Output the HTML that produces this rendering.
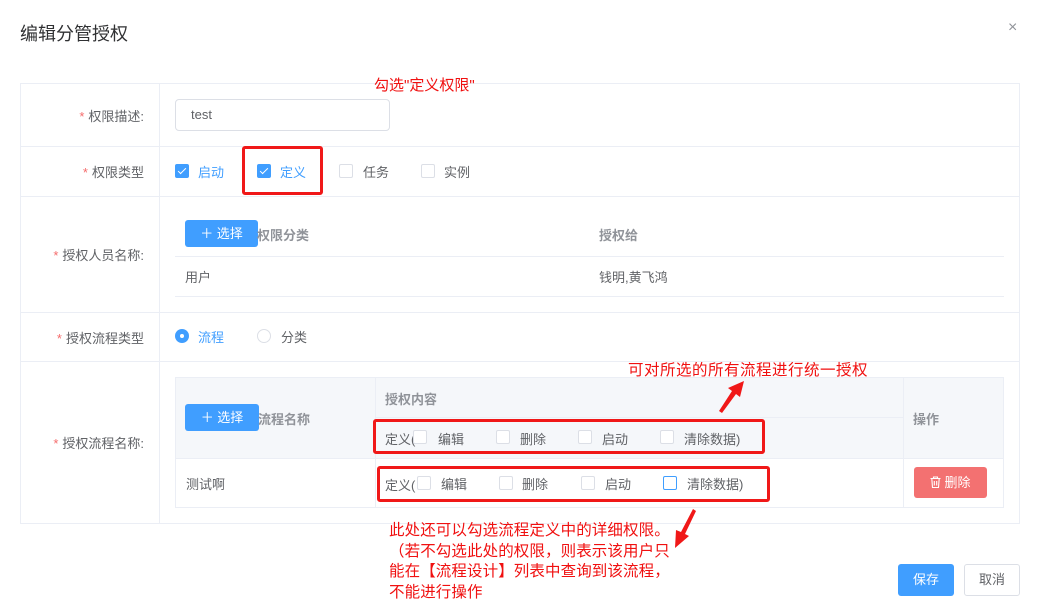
<!DOCTYPE html>
<html><head><meta charset="utf-8"><style>
*{margin:0;padding:0;box-sizing:border-box}
body{width:1040px;height:616px;background:#fff;font-family:"Liberation Sans","Noto Sans CJK SC",sans-serif;font-size:13px;color:#606266;position:relative;overflow:hidden}
.a{position:absolute;white-space:nowrap}
.l{position:absolute;background:#ebeef5}
.cb{position:absolute;width:14px;height:14px;border:1px solid #dcdfe6;border-radius:2px;background:#fff}
.cb.on{background:#409eff;border-color:#409eff}
.cb.on:after{content:"";position:absolute;left:4px;top:1px;width:3px;height:7px;border:solid #fff;border-width:0 1px 1px 0;transform:rotate(45deg)}
.lab{position:absolute;right:896px;white-space:nowrap;color:#606266}
.lab b{color:#f56c6c;font-weight:normal;margin-right:4px}
.red{color:#f01010}
.rb{position:absolute;border:3px solid #f01818;border-radius:3px}
.btn{position:absolute;background:#409eff;color:#fff;border-radius:3px;text-align:center}
</style></head><body>
<div class="a" style="left:20px;top:20px;font-size:18px;color:#303133">编辑分管授权</div>
<div class="a" style="left:1008px;top:19px;font-size:16px;color:#909399">×</div>

<div class="a" style="left:20px;top:83px;width:1000px;height:441px;border:1px solid #ebeef5"></div>
<div class="l" style="left:159px;top:83px;width:1px;height:441px"></div>
<div class="l" style="left:20px;top:146px;width:1000px;height:1px"></div>
<div class="l" style="left:20px;top:196px;width:1000px;height:1px"></div>
<div class="l" style="left:20px;top:312px;width:1000px;height:1px"></div>
<div class="l" style="left:20px;top:361px;width:1000px;height:1px"></div>

<div class="lab" style="top:106px"><b>*</b>权限描述:</div>
<div class="lab" style="top:162px"><b>*</b>权限类型</div>
<div class="lab" style="top:245px"><b>*</b>授权人员名称:</div>
<div class="lab" style="top:328px"><b>*</b>授权流程类型</div>
<div class="lab" style="top:433px"><b>*</b>授权流程名称:</div>

<div class="a" style="left:175px;top:99px;width:215px;height:32px;border:1px solid #dcdfe6;border-radius:4px;padding:7px 15px;color:#606266">test</div>
<div class="a red" style="left:374px;top:74px;font-size:15px">勾选"定义权限"</div>

<div class="cb on" style="left:175px;top:164px"></div><div class="a" style="left:198px;top:162px;color:#409eff">启动</div>
<div class="cb on" style="left:257px;top:164px"></div><div class="a" style="left:280px;top:162px;color:#409eff">定义</div>
<div class="cb" style="left:339px;top:164px"></div><div class="a" style="left:363px;top:162px">任务</div>
<div class="cb" style="left:421px;top:164px"></div><div class="a" style="left:444px;top:162px">实例</div>
<div class="rb" style="left:242px;top:146px;width:81px;height:49px"></div>

<div class="l" style="left:175px;top:256px;width:829px;height:1px"></div>
<div class="l" style="left:175px;top:296px;width:829px;height:1px"></div>
<div class="btn" style="left:185px;top:220px;width:73px;height:27px;line-height:27px">＋ 选择</div>
<div class="a" style="left:257px;top:225px;color:#909399;font-weight:bold">权限分类</div>
<div class="a" style="left:599px;top:225px;color:#909399;font-weight:bold">授权给</div>
<div class="a" style="left:185px;top:267px">用户</div>
<div class="a" style="left:599px;top:267px">钱明,黄飞鸿</div>

<div class="a" style="left:175px;top:329px;width:14px;height:14px;border-radius:50%;background:#409eff"><div style="position:absolute;left:5px;top:5px;width:4px;height:4px;border-radius:50%;background:#fff"></div></div>
<div class="a" style="left:198px;top:327px;color:#409eff">流程</div>
<div class="a" style="left:257px;top:329px;width:14px;height:14px;border-radius:50%;border:1px solid #dcdfe6"></div>
<div class="a" style="left:281px;top:327px">分类</div>

<div class="a" style="left:175px;top:377px;width:829px;height:81px;background:#f5f7fa"></div>
<div class="a" style="left:175px;top:377px;width:829px;height:131px;border:1px solid #ebeef5"></div>
<div class="l" style="left:375px;top:377px;width:1px;height:131px"></div>
<div class="l" style="left:903px;top:377px;width:1px;height:131px"></div>
<div class="l" style="left:375px;top:417px;width:528px;height:1px"></div>
<div class="l" style="left:175px;top:458px;width:829px;height:1px"></div>
<div class="btn" style="left:185px;top:404px;width:74px;height:27px;line-height:27px">＋ 选择</div>
<div class="a" style="left:258px;top:409px;color:#909399;font-weight:bold">流程名称</div>
<div class="a" style="left:385px;top:389px;color:#909399;font-weight:bold">授权内容</div>
<div class="a" style="left:913px;top:409px;color:#909399;font-weight:bold">操作</div>

<div class="a" style="left:385px;top:429px">定义(</div>
<div class="cb" style="left:413px;top:430px"></div><div class="a" style="left:438px;top:429px">编辑</div>
<div class="cb" style="left:496px;top:430px"></div><div class="a" style="left:520px;top:429px">删除</div>
<div class="cb" style="left:578px;top:430px"></div><div class="a" style="left:602px;top:429px">启动</div>
<div class="cb" style="left:660px;top:430px"></div><div class="a" style="left:684px;top:429px">清除数据)</div>
<div class="rb" style="left:373px;top:419px;width:392px;height:35px"></div>

<div class="a" style="left:186px;top:474px">测试啊</div>
<div class="a" style="left:385px;top:475px">定义(</div>
<div class="cb" style="left:417px;top:476px"></div><div class="a" style="left:441px;top:474px">编辑</div>
<div class="cb" style="left:499px;top:476px"></div><div class="a" style="left:522px;top:474px">删除</div>
<div class="cb" style="left:581px;top:476px"></div><div class="a" style="left:605px;top:474px">启动</div>
<div class="cb" style="left:663px;top:476px;border-color:#409eff"></div><div class="a" style="left:687px;top:474px">清除数据)</div>
<div class="rb" style="left:377px;top:466px;width:393px;height:36px"></div>
<div class="a" style="left:914px;top:467px;width:73px;height:31px;background:#f37171;border-radius:3px;color:#fff;text-align:center;line-height:31px">
<svg width="11" height="12" viewBox="0 0 11 12" style="vertical-align:-1px;margin-right:3px"><path d="M0.5 2.5h10M3.5 2.5V1h4v1.5M1.8 2.5l.7 9h6l.7-9M4.3 5v4.5M6.7 5v4.5" stroke="#fff" stroke-width="1.1" fill="none"/></svg>删除</div>

<div class="a red" style="left:628px;top:358px;font-size:15.5px;letter-spacing:0.5px">可对所选的所有流程进行统一授权</div>
<svg class="a" style="left:710px;top:378px" width="40" height="40"><path d="M34 3 L30 19 L26 16 L12 35 L9 33 L22 13 L18 10 Z" fill="#f01818"/></svg>
<svg class="a" style="left:665px;top:505px" width="40" height="45"><path d="M28 4 L31 6 L20 29 L24 31 L10 43 L11 25 L16 27 Z" fill="#f01818"/></svg>
<div class="a red" style="left:389px;top:521px;font-size:15.5px;line-height:20.5px;letter-spacing:0.1px">此处还可以勾选流程定义中的详细权限。<br>（若不勾选此处的权限，则表示该用户只<br>能在【流程设计】列表中查询到该流程，<br>不能进行操作</div>

<div class="btn" style="left:898px;top:564px;width:56px;height:32px;line-height:32px">保存</div>
<div class="a" style="left:964px;top:564px;width:56px;height:32px;line-height:30px;border:1px solid #dcdfe6;border-radius:3px;text-align:center;color:#606266">取消</div>
</body></html>
